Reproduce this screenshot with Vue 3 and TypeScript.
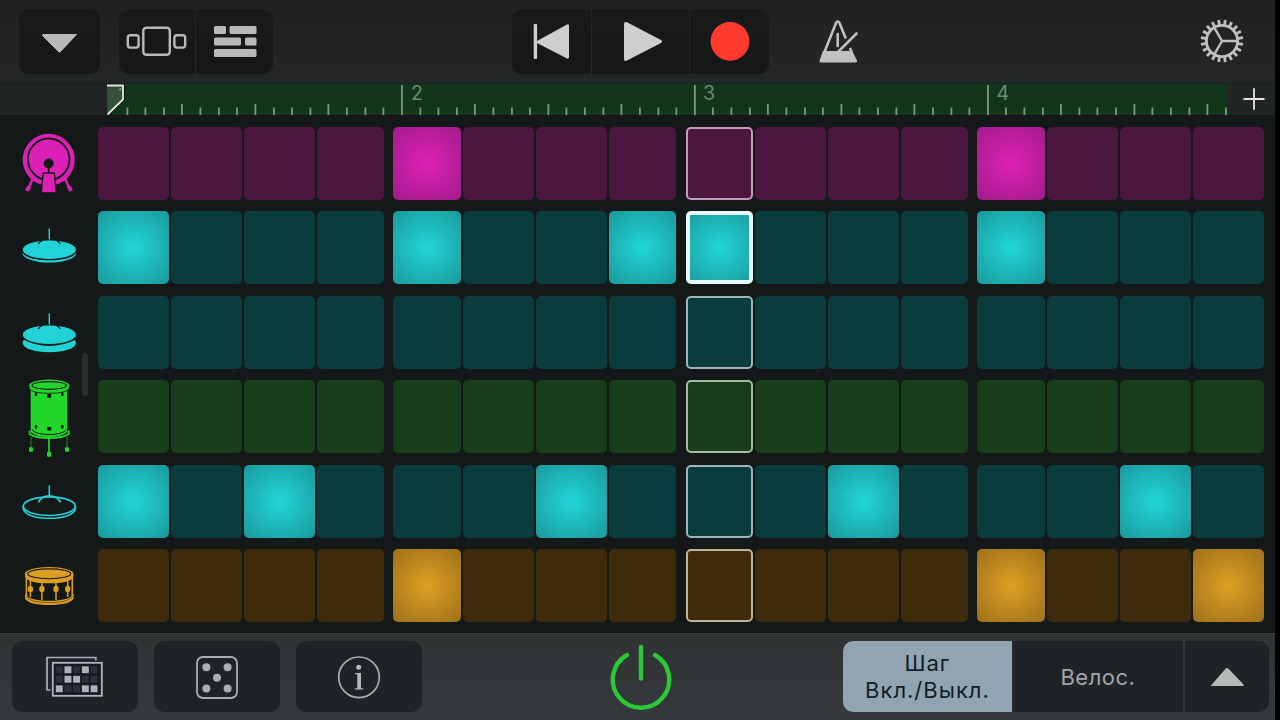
<script setup lang="ts">
interface Track {
  id: string
  active: number[]
}

const tracks: Track[] = [
  { id: 'kick', active: [4, 12] },
  { id: 'hat', active: [0, 4, 7, 8, 12] },
  { id: 'open', active: [] },
  { id: 'tom', active: [] },
  { id: 'ride', active: [0, 2, 6, 10, 14] },
  { id: 'snare', active: [4, 12, 15] },
]

const groups: number[] = [0, 1, 2, 3]
const steps: number[] = [0, 1, 2, 3]
const playhead = 8

interface Tick {
  x: number
  y: number
  h: number
}

const ticks: Tick[] = Array.from({ length: 61 }, (_, k) => {
  const i = k + 1
  const top = i % 16 === 0 ? 1 : i % 4 === 0 ? 20 : 23.5
  return { x: Math.round((i * 18.31 + 1) * 2) / 2, y: top, h: 31 - top }
})

const bars = [
  { n: 2, x: 304 },
  { n: 3, x: 596 },
  { n: 4, x: 889.5 },
]

const teeth: number[] = Array.from({ length: 20 }, (_, i) => i * 18 + 9)

const patternOn = ['01010', '01100', '10011']
</script>

<template>
  <div class="screen">
    <header class="topbar">
      <div class="pill menu">
        <svg width="80" height="65"><path d="M24 25.5H57.5L41.5 42.5Q40.5 43.5 39.5 42.5L23.5 26.5Z" fill="#b9b9b9" stroke="#b9b9b9" stroke-linejoin="round" /></svg>
      </div>
      <div class="pill views">
        <svg width="76" height="65" fill="none" stroke="#b9b9b9" stroke-width="2.4">
          <rect x="24.3" y="18.8" width="26.5" height="27" rx="3" />
          <rect x="8.8" y="26.3" width="10.8" height="12.3" rx="2.5" />
          <rect x="55.4" y="26.3" width="10.8" height="12.3" rx="2.5" />
        </svg>
        <svg class="split" width="77" height="65" fill="#b9b9b9">
          <rect x="18" y="17" width="12" height="8" rx="1.5" />
          <rect x="33.5" y="17" width="27" height="8" rx="1.5" />
          <rect x="18" y="28.5" width="27" height="8" rx="1.5" />
          <rect x="49" y="28.5" width="11.5" height="8" rx="1.5" />
          <rect x="18" y="40" width="42.5" height="8" rx="1.5" />
        </svg>
      </div>
      <div class="pill transport">
        <svg width="79" height="65" fill="#cecece">
          <rect x="21.7" y="15" width="3.4" height="35" rx="1" />
          <path d="M25 32L55 15.5Q57 14.5 57 17V47.5Q57 50.5 55 49.5L25 34Z" />
        </svg>
        <svg class="split" width="97" height="65" fill="#cecece">
          <path d="M32 15Q32 12 35 13.3L69 31Q71 32.5 69 34L35 51.5Q32 53 32 50Z" />
        </svg>
        <svg class="split" width="81" height="65"><circle cx="40" cy="32.3" r="19.4" fill="#ff3b30" /></svg>
      </div>
      <svg class="metronome" width="42" height="46">
        <path d="M3.3 40.5L17 6Q18.7 3 20.5 6L26.8 21.5M31 31L34.5 40.5" fill="none" stroke="#bfc1c1" stroke-width="2.6" />
        <path d="M6 34H33L38 43.5Q38.3 45.5 36.5 45.5H2Q0 45.5 .5 43.5L4 34Z" fill="#bfc1c1" />
        <path d="M18.7 17V29" stroke="#bfc1c1" stroke-width="2.6" stroke-linecap="round" />
        <path d="M19 35L37.5 16.5" stroke="#bfc1c1" stroke-width="2.6" stroke-linecap="round" />
      </svg>
      <svg class="gear" width="44" height="44" viewBox="-22 -22 44 44">
        <g stroke="#bebfbf" fill="none">
          <circle r="15.6" stroke-width="2.8" />
          <path v-for="a in teeth" :key="a" d="M16 0H21.3" stroke-width="2.8" :transform="`rotate(${a})`" />
          <path d="M0 0H16M0 0L-8 -13.8M0 0L-8 13.8" stroke-width="2.4" />
        </g>
      </svg>
    </header>

    <div class="ruler">
      <svg class="timeline" width="1120" height="32">
        <rect y="0" width="1120" height="30" fill="#12361a" />
        <rect y="29" width="1120" height="1" fill="#12401d" />
        <rect v-for="t in ticks" :key="t.x" :x="t.x" :y="t.y" :height="t.h" width="1.8" fill="#749c7b" />
        <text v-for="b in bars" :key="b.n" :x="b.x" y="16.2">{{ b.n }}</text>
        <path d="M0 1.5H16.2V16L.5 30.5" fill="#35513b" stroke="#0b1a0e" stroke-width="3.5" />
        <path d="M0 1.5H16V15.5L.5 30.5" fill="#35513b" stroke="#e2e9e3" stroke-width="1.8" />
        <path d="M11.5 6L13.5 4.5V6" fill="none" stroke="#9bb09f" stroke-width="1" />
      </svg>
      <svg class="plus" width="24" height="24"><path d="M1.5 12H22.5M12 1.3V22.7" stroke="#e4e6e6" stroke-width="1.8" /></svg>
    </div>

    <main class="grid">
      <div v-for="t in tracks" :key="t.id" class="track" :class="t.id">
        <svg class="drum" width="98" height="73">
          <template v-if="t.id === 'kick'">
            <path d="M33 51L27.8 63M64.8 51L70 63" class="line" stroke-width="2.5" />
            <path d="M29 59.5L27 64M69 59.5L71 64" class="line" stroke-width="4" />
            <circle cx="48.7" cy="32.8" r="26" class="body" />
            <circle cx="48.7" cy="32.3" r="20.8" class="cut" stroke-width="1.8" />
            <circle cx="48.7" cy="36.5" r="5" fill="#151818" />
            <path d="M48.7 38V47" class="cut" stroke-width="1.6" />
            <path d="M43 47.5Q43 46 44.5 46H53Q54.5 46 54.5 47.5L56.2 65H41.3Z" class="body" stroke="#151818" stroke-width="1.4" />
            <path d="M42 64.5H55.5" class="line" stroke-width="1.4" />
          </template>
          <template v-else-if="t.id === 'hat' || t.id === 'open'">
            <path d="M49.3 17.5V29.5" class="line" stroke-width="1.4" />
            <ellipse cx="49.3" :cy="t.id === 'hat' ? 42.2 : 46.8" rx="26.7" ry="9.4" class="body" />
            <path v-if="t.id === 'open'" d="M22 37H77V43Q49 57 22 43Z" fill="#151818" />
            <ellipse cx="49.3" cy="38.7" rx="27" ry="9.8" class="body" stroke="#151818" stroke-width="1" />
            <path v-if="t.id === 'hat'" d="M22.6 41Q27 48.7 49.3 48.7T76 41" class="cut" stroke-width="1.1" />
            <path d="M38.3 32.8Q39.6 30.8 42.5 29.2M60.3 32.8Q59 30.8 56.1 29.2" class="cut" stroke-width="1.4" />
          </template>
          <template v-else-if="t.id === 'tom'">
            <path d="M31 57V69M67 57V69" class="line thin" stroke-width="1" />
            <path d="M49 57V73" class="line" stroke-width="1.7" />
            <rect x="29" y="67.3" width="4" height="4.5" rx="1" class="body" />
            <rect x="65" y="67.3" width="4" height="4.5" rx="1" class="body" />
            <rect x="47" y="72" width="4.2" height="4.8" rx="1" class="body" />
            <path d="M30.7 8H67.3V52Q62 57 49 57T30.7 52Z" class="body" />
            <path d="M29.6 50.5V54Q35 58 49.2 58T68.8 54V50.5" class="line" stroke-width="1.8" />
            <path d="M31.8 49.5Q36 54.5 49.2 54.5T66.7 49.5" class="cut" stroke-width="1" />
            <path d="M29.2 5V8.5Q32 13.3 49.2 13.3T69.3 8.5V5Z" class="body" stroke="#151818" stroke-width=".8" />
            <ellipse cx="49.2" cy="5.3" rx="20" ry="5.9" class="body" />
            <ellipse cx="49.2" cy="5.5" rx="17.2" ry="3.9" class="cut" stroke-width="1.1" />
            <path d="M36 12.2V16M62.3 12.2V16M36 45V48.5M62.3 45V48.5" class="cut" stroke-width="2.3" />
            <path d="M49.2 13.7V17.8M49.2 47V50.6" class="cut" stroke-width="4" />
          </template>
          <template v-else-if="t.id === 'ride'">
            <g class="line" stroke-width="1.6">
              <path d="M49.3 20.5V31" />
              <path d="M38.3 37.5Q39.3 35 42 33.3M60.5 37.5Q59.5 35 56.8 33.3" />
              <ellipse cx="49.3" cy="41.2" rx="26" ry="9.3" />
              <path d="M23.2 41V44Q27 53.3 49.3 53.3T75.4 44V41" />
            </g>
            <path d="M42 33Q45.5 30.8 49.3 30.8T56.6 33" class="line" stroke-width="1.6" />
          </template>
          <template v-else>
            <path d="M26.4 29V48M72.3 29V48" class="line" stroke-width="1.6" />
            <path d="M30.4 31V48M41.9 33V51M56 33V51M67.7 31V48" class="line" stroke-width="1.5" />
            <ellipse v-for="x in [30.4, 41.9, 56, 67.7]" :key="x" :cx="x" cy="40" rx="2.7" ry="3.3" class="body" />
            <path d="M25 45Q29 51.8 49.2 51.8T73.6 45V49.5Q70 56 49.2 56T25 49.5Z" class="body" />
            <path d="M26 47.7Q30 53.6 49.2 53.6T72.6 47.7" class="cut" stroke-width=".5" />
            <path d="M25 25V28Q28 34.3 49.2 34.3T73.4 28V25Z" class="body" />
            <ellipse cx="49.2" cy="24.8" rx="24.2" ry="6.8" class="body" />
            <ellipse cx="49.2" cy="24.8" rx="21.6" ry="4.9" class="cut" stroke-width="1.1" />
          </template>
        </svg>
        <div v-for="g in groups" :key="g" class="beat" :class="`beat-${g}`">
          <span
            v-for="s in steps"
            :key="s"
            class="step"
            :class="{ on: t.active.includes(g * 4 + s), current: g * 4 + s === playhead }"
          />
        </div>
      </div>
      <i class="scroll" />
    </main>

    <footer class="bottombar">
      <button class="tool">
        <svg class="pattern" width="58" height="42">
          <path d="M49.8 4.5V1.5H1V34H4.5" fill="none" stroke="#a9afb8" stroke-width="1.7" />
          <rect x="6.8" y="6.8" width="49" height="33" fill="#141b20" stroke="#b1b3c0" stroke-width="1.8" />
          <template v-for="(row, r) in patternOn" :key="r">
            <rect
              v-for="(c, i) in row.split('')"
              :key="i"
              :x="9.8 + i * 8.7"
              :y="10.3 + r * 9.5"
              width="6.9"
              height="6.9"
              :fill="c === '1' ? '#adb1bb' : '#2a3136'"
            />
          </template>
        </svg>
      </button>
      <button class="tool">
        <svg width="44" height="44" fill="#a9adb6">
          <rect x="2" y="2" width="40" height="41" rx="6" fill="none" stroke="#a9adb6" stroke-width="1.8" />
          <circle cx="11.4" cy="12.2" r="4" /><circle cx="32.6" cy="12.2" r="4" />
          <circle cx="22" cy="22.8" r="4" />
          <circle cx="11.4" cy="33.4" r="4" /><circle cx="32.6" cy="33.4" r="4" />
        </svg>
      </button>
      <button class="tool">
        <svg width="44" height="44">
          <circle cx="22" cy="22.3" r="20.3" fill="none" stroke="#a9adb6" stroke-width="1.7" />
          <circle cx="21.7" cy="12.3" r="2.5" fill="#b4b7bf" />
          <path d="M18 18H24V33.3H26.2V34.5H17.7V33.3H20.3V19.3H18Z" fill="#b4b7bf" />
        </svg>
      </button>
      <svg class="power" width="64" height="70" fill="none" stroke="#2bc936" stroke-width="4.4" stroke-linecap="round">
        <path d="M18 13A28.2 28.2 0 1 0 46 13" />
        <path d="M32 5V36.5" />
      </svg>
      <div class="modes">
        <button class="mode selected">Шаг<br>Вкл./Выкл.</button>
        <button class="mode velocity">Велос.</button>
        <button class="mode expand">
          <svg width="36" height="22"><path d="M2 19.5L17 2.3Q18 1.5 19 2.3L34.5 18.5Q35 20 34 20H2.5Q1 20 2 19Z" fill="#b7b9b9" /></svg>
        </button>
      </div>
    </footer>
  </div>
</template>

<style>
body {
  margin: 0;
  background: #000;
}
</style>

<style scoped>
.screen {
  width: 1275px;
  height: 720px;
  overflow: hidden;
  display: flex;
  flex-direction: column;
  background: #151818;
  font-family: Inter, Roboto, "Liberation Sans", sans-serif;
}
svg {
  display: block;
  flex: none;
}
.topbar {
  height: 83px;
  flex: none;
  display: flex;
  align-items: flex-start;
  padding: 9px 0 0 19px;
  box-sizing: border-box;
  background: linear-gradient(#21211f, #242727);
}
.pill {
  display: flex;
  height: 65px;
  border-radius: 9px;
  overflow: hidden;
  background: linear-gradient(#191919, #151817);
}
.menu {
  width: 81px;
}
.views {
  width: 154px;
  margin-left: 19px;
}
.split {
  border-left: 1px solid #252827;
}
.transport {
  width: 257px;
  margin-left: 239px;
}
.metronome {
  margin: 8px 0 0 49.5px;
}
.gear {
  margin: 9.5px 0 0 339px;
}
.ruler {
  height: 32px;
  flex: none;
  display: flex;
  align-items: flex-start;
  padding-left: 107px;
  background: #222525;
  box-shadow: inset 0 1px #1c1f1f;
}
.timeline {
  margin-top: 1px;
  height: 31px;
  overflow: visible;
}
.timeline text {
  font-size: 19.5px;
  fill: #688e6f;
}
.plus {
  margin: 4px 0 0 15px;
}
.grid {
  height: 518px;
  box-sizing: border-box;
  padding-top: 12px;
  flex: none;
  display: flex;
  flex-direction: column;
  gap: 11.4px;
  position: relative;
}
.track {
  display: flex;
  height: 73px;
  flex: none;
}
.drum {
  overflow: visible;
}
.body {
  fill: var(--lit);
}
.line {
  stroke: var(--lit);
  fill: none;
}
.thin {
  opacity: .6;
}
.cut {
  stroke: #151818;
  fill: none;
}
.beat {
  display: grid;
  column-gap: 2px;
}
.beat-0 {
  grid-template-columns: 71px 71px 71px 67px;
  margin-right: 9px;
}
.beat-1 {
  grid-template-columns: 68px 71px 71px 67px;
  margin-right: 10px;
}
.beat-2 {
  grid-template-columns: 67px 71px 71px 67px;
  margin-right: 9px;
}
.beat-3 {
  grid-template-columns: 68px 71px 71px 71px;
}
.step {
  box-sizing: border-box;
  border-radius: 5px;
  background: var(--off);
}
.on {
  background: radial-gradient(circle at 50% 50%, var(--lit) 5%, var(--edge) 95%);
}
.current {
  border: 2px solid var(--ring);
}
.on.current {
  border: 4px solid #e6fbfa;
  background-origin: border-box;
}
.kick {
  --lit: #dc20b5;
  --edge: #a41c8b;
  --off: #4c173f;
  --ring: #c59bbb;
}
.hat,
.open,
.ride {
  --lit: #21d3d6;
  --edge: #1b9c9e;
  --off: #0a3b3d;
  --ring: #9cb6b6;
}
.tom {
  --lit: #23d62b;
  --edge: #1c9722;
  --off: #183d1b;
  --ring: #a5baa4;
}
.snare {
  --lit: #db9e22;
  --edge: #a0721b;
  --off: #3d2b0c;
  --ring: #c3b495;
}
.scroll {
  position: absolute;
  left: 81.5px;
  top: 238px;
  width: 6px;
  height: 43px;
  border-radius: 3px;
  background: #2b2e2e;
}
.bottombar {
  height: 87px;
  flex: none;
  box-sizing: border-box;
  display: flex;
  align-items: flex-start;
  padding: 7px 0 0 11.6px;
  border-top: 1px solid #3b3f41;
  background: linear-gradient(#2f3334, #36393c);
}
button {
  border: 0;
  padding: 0;
  margin: 0;
  font: inherit;
  display: flex;
  align-items: center;
  justify-content: center;
}
.tool {
  width: 126.4px;
  height: 71px;
  margin-right: 15.6px;
  border-radius: 10px;
  background: #1f2325;
}
.pattern {
  margin-left: 1px;
}
.power {
  margin: 1px 0 0 171.4px;
}
.modes {
  display: flex;
  margin-left: 170px;
  height: 71px;
  border-radius: 10px;
  overflow: hidden;
  background: #1f2325;
}
.mode {
  background: none;
  color: #a3a5aa;
  font-size: 22px;
  letter-spacing: .5px;
}
.selected {
  width: 169px;
  background: #91a4b1;
  color: #111d26;
  line-height: 27px;
  letter-spacing: 1px;
}
.velocity {
  width: 171px;
  border-left: 1px solid #2b3032;
}
.expand {
  width: 86px;
  border-left: 2px solid #313638;
}
</style>
